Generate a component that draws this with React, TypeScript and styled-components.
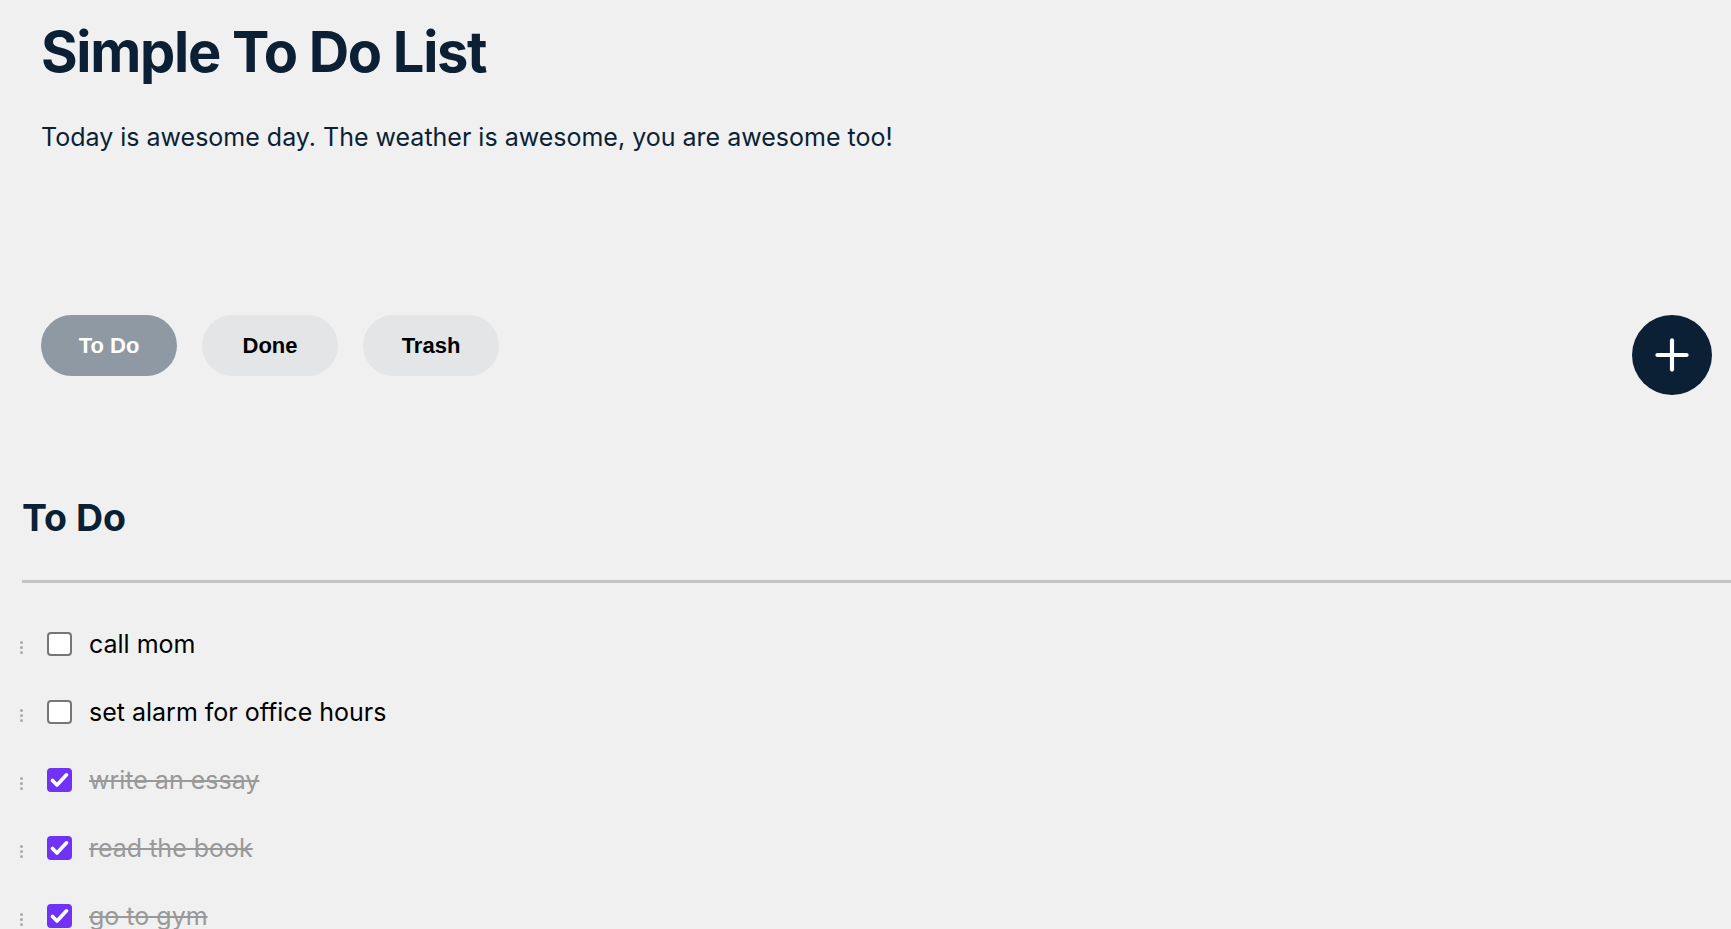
import React, { useState } from 'react';
import styled, { createGlobalStyle } from 'styled-components';
import { Plus } from 'lucide-react';

const GlobalStyle = createGlobalStyle`
    html, body {
        margin: 0;
        padding: 0;
        background: #f0f0f0;
    }

    body {
        font-family: Inter, 'Noto Sans', sans-serif;
        color: #0b1f35;
    }

    * {
        box-sizing: border-box;
    }
`;

const Page = styled.main`
    display: flex;
    flex-direction: column;
    min-height: 100vh;
    overflow: hidden;
`;

const Header = styled.header`
    display: flex;
    flex-direction: column;
    padding: 19px 19px 0 41px;
`;

const Title = styled.h1`
    margin: 0;
    font-size: 56px;
    line-height: 1.2;
    font-weight: 700;
    letter-spacing: -1.3px;
    color: #0b1f35;
`;

const Subtitle = styled.p`
    margin: 36px 0 0;
    font-size: 25px;
    line-height: 1.2;
    font-weight: 400;
    color: #0b1f35;
`;

const Toolbar = styled.div`
    display: flex;
    align-items: flex-start;
    justify-content: space-between;
    margin-top: 163px;
`;

const Tabs = styled.div`
    display: flex;
    gap: 25px;
`;

type TabProps = {
    $active: boolean;
};

const Tab = styled.button<TabProps>`
    width: 136px;
    height: 61px;
    border: none;
    border-radius: 31px;
    padding: 0;
    font-family: 'Liberation Sans', Arial, sans-serif;
    font-size: 22px;
    font-weight: 700;
    cursor: pointer;
    color: ${(props) => (props.$active ? '#fff' : '#000')};
    background-color: ${(props) => (props.$active ? '#8e99a3' : '#e4e5e7')};
`;

const AddButton = styled.button`
    display: flex;
    align-items: center;
    justify-content: center;
    width: 80px;
    height: 80px;
    border: none;
    border-radius: 50%;
    padding: 0;
    cursor: pointer;
    color: #fff;
    background-color: #0b1f35;
`;

const ListSection = styled.section`
    display: flex;
    flex-direction: column;
    padding-left: 22px;
    margin-top: 100px;
`;

const SectionTitle = styled.h2`
    margin: 0;
    font-size: 37.5px;
    line-height: 1.2;
    font-weight: 700;
    color: #0b1f35;
`;

const Divider = styled.hr`
    margin: 40px 0 0;
    border: none;
    height: 3px;
    background: #c4c4c4;
`;

const List = styled.ul`
    list-style: none;
    margin: 27px 0 0;
    padding: 0;
`;

const Row = styled.li`
    display: flex;
    align-items: center;
    height: 68px;
`;

const Handle = styled.span`
    display: flex;
    width: 3px;
    margin: 6px 0 0 -2px;
    color: #a9a9a9;
`;

type BoxProps = {
    $checked: boolean;
};

const Box = styled.span<BoxProps>`
    display: flex;
    align-items: center;
    justify-content: center;
    width: 25px;
    height: 24px;
    margin-left: 24px;
    border-radius: 4px;
    border: ${(props) => (props.$checked ? 'none' : '2px solid #767676')};
    background-color: ${(props) => (props.$checked ? '#7033f5' : '#fff')};
    cursor: pointer;
`;

const Label = styled.span<BoxProps>`
    margin-left: 17px;
    font-size: 25px;
    line-height: 1.2;
    color: ${(props) => (props.$checked ? '#999' : '#000')};
    text-decoration: ${(props) => (props.$checked ? 'line-through' : 'none')};
    text-decoration-thickness: 2px;
`;

type Task = {
    id: number;
    text: string;
    done: boolean;
};

const initialTasks: Task[] = [
    { id: 1, text: 'call mom', done: false },
    { id: 2, text: 'set alarm for office hours', done: false },
    { id: 3, text: 'write an essay', done: true },
    { id: 4, text: 'read the book', done: true },
    { id: 5, text: 'go to gym', done: true },
];

const tabs = ['To Do', 'Done', 'Trash'];

function GripDots(): JSX.Element {
    return (
        <svg width="3" height="13" viewBox="0 0 3 13" fill="currentColor">
            <circle cx="1.5" cy="1.5" r="1.5" />
            <circle cx="1.5" cy="6.5" r="1.5" />
            <circle cx="1.5" cy="11.5" r="1.5" />
        </svg>
    );
}

function CheckMark(): JSX.Element {
    return (
        <svg width="19" height="16" viewBox="0 0 19 16" fill="none">
            <path d="M2.5 8.5 L7 13 L16.5 2.8" stroke="#fff" strokeWidth="3.6" strokeLinecap="round" strokeLinejoin="round" />
        </svg>
    );
}

export default function App(): JSX.Element {
    const [active, setActive] = useState('To Do');
    const [tasks, setTasks] = useState(initialTasks);

    const toggle = (id: number) =>
        setTasks(tasks.map((t) => (t.id === id ? { ...t, done: !t.done } : t)));

    return (
        <>
            <GlobalStyle />
            <Page>
                <Header>
                    <Title>Simple To Do List</Title>
                    <Subtitle>Today is awesome day. The weather is awesome, you are awesome too!</Subtitle>
                    <Toolbar>
                        <Tabs>
                            {tabs.map((tab) => (
                                <Tab key={tab} $active={tab === active} onClick={() => setActive(tab)}>
                                    {tab}
                                </Tab>
                            ))}
                        </Tabs>
                        <AddButton aria-label="Add task">
                            <Plus size={50} strokeWidth={2} />
                        </AddButton>
                    </Toolbar>
                </Header>
                <ListSection>
                    <SectionTitle>To Do</SectionTitle>
                    <Divider />
                    <List>
                        {tasks.map((task) => (
                            <Row key={task.id}>
                                <Handle>
                                    <GripDots />
                                </Handle>
                                <Box $checked={task.done} onClick={() => toggle(task.id)}>
                                    {task.done && <CheckMark />}
                                </Box>
                                <Label $checked={task.done}>{task.text}</Label>
                            </Row>
                        ))}
                    </List>
                </ListSection>
            </Page>
        </>
    );
}
